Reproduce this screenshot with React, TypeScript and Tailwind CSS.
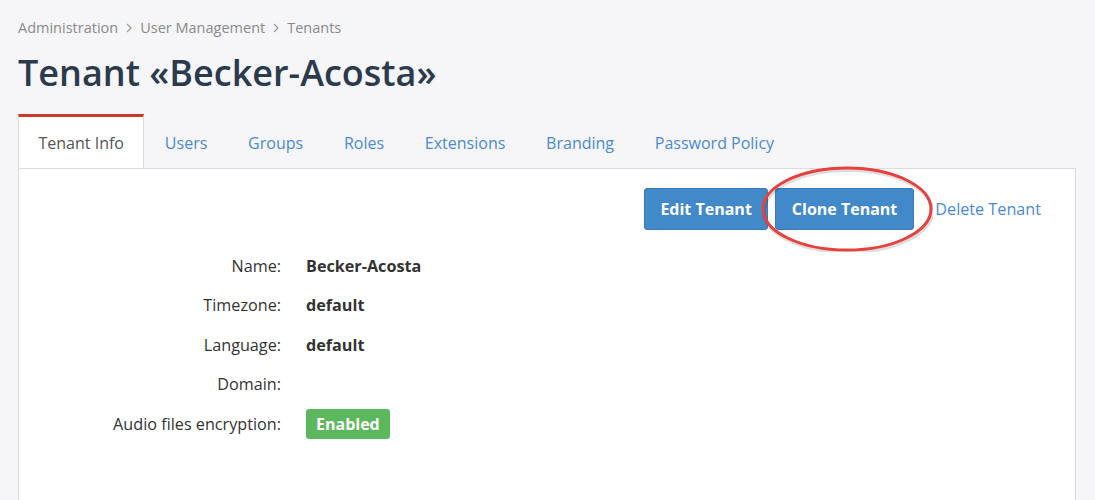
import React from "react";

const tabs = ["Tenant Info", "Users", "Groups", "Roles", "Extensions", "Branding", "Password Policy"];

const rows: { label: string; value?: string; badge?: string }[] = [
  { label: "Name:", value: "Becker-Acosta" },
  { label: "Timezone:", value: "default" },
  { label: "Language:", value: "default" },
  { label: "Domain:" },
  { label: "Audio files encryption:", badge: "Enabled" },
];

const Chevron = () => (
  <svg width="8" height="10" viewBox="0 0 8 10" className="mx-[7px] inline-block" fill="none">
    <path d="M2 1l4 4-4 4" stroke="#9a9a9a" strokeWidth="1.2" />
  </svg>
);

export default function App() {
  return (
    <div className="min-h-[500px] bg-[#f6f6f9] px-[18px] pt-[18px] font-['Open_Sans',sans-serif] overflow-hidden">
      <nav className="flex items-center text-[14.5px] leading-[20px] text-[#8a8a8a]">
        <span>Administration</span>
        <Chevron />
        <span>User Management</span>
        <Chevron />
        <span>Tenants</span>
      </nav>
      <h1 className="mt-[14px] text-[36px] leading-[42px] font-semibold text-[#2b3a4c]">
        Tenant «Becker-Acosta»
      </h1>

      <div className="mt-[20px] flex mr-[1px]">
        {tabs.map((t, i) =>
          i === 0 ? (
            <div
              key={t}
              className="relative z-10 -mb-px h-[54px] border-t-[3px] border-t-[#c9392c] border-x border-x-[#dcdcdc] bg-white px-[19.5px] pt-[14px] text-[16px] text-[#555]"
            >
              {t}
            </div>
          ) : (
            <div key={t} className="h-[54px] px-[20.4px] pt-[17px] text-[16px] text-[#4a8ad4]">
              {t}
            </div>
          )
        )}
      </div>

      <div className="mr-[1px] h-[340px] border border-[#dcdcdc] bg-white pt-[19px]">
        <div className="flex justify-end pr-[20px]">
          <div className="flex items-center gap-[7px]">
            <button className="h-[42px] rounded-[3px] border border-[#3a7cba] bg-[#4289c9] px-[15px] text-[16px] font-bold text-white">
              Edit Tenant
            </button>
            <div className="relative">
              <button className="h-[42px] rounded-[3px] border border-[#3a7cba] bg-[#4289c9] px-[16px] text-[16px] font-bold text-white">
                Clone Tenant
              </button>
              <svg
                className="pointer-events-none absolute left-[-14px] top-[-22px]"
                width="172"
                height="86"
                viewBox="0 0 172 86"
              >
                <ellipse cx="86" cy="43" rx="84" ry="41" fill="none" stroke="#00000022" strokeWidth="4" transform="translate(1 2)" />
                <ellipse cx="86" cy="43" rx="84" ry="41" fill="none" stroke="#e8403d" strokeWidth="3" />
              </svg>
            </div>
            <a className="px-[14px] text-[16.2px] text-[#4a8ad4]">Delete Tenant</a>
          </div>
        </div>

        <div className="mt-[16px] flex flex-col">
          {rows.map((r) => (
            <div key={r.label} className="flex h-[39.5px] items-center text-[16.2px]">
              <div className="w-[262px] text-right text-[#333]">{r.label}</div>
              <div className="ml-[25px] font-bold text-[#333]">
                {r.value}
                {r.badge && (
                  <span className="flex h-[30px] items-center rounded-[3px] bg-[#5cb85c] px-[10px] text-[16px] text-white">
                    {r.badge}
                  </span>
                )}
              </div>
            </div>
          ))}
        </div>
      </div>
    </div>
  );
}
